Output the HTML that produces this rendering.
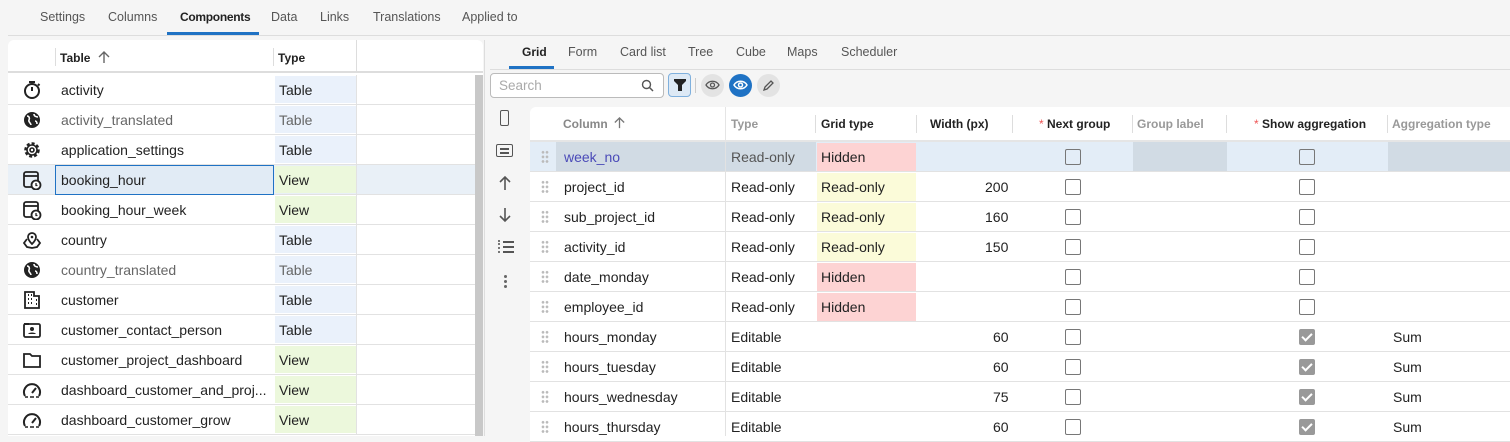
<!DOCTYPE html>
<html><head><meta charset="utf-8"><style>
*{box-sizing:border-box;margin:0;padding:0}
body{width:1510px;height:436px;overflow:hidden;background:#f5f5f5;font-family:"Liberation Sans",Arial,sans-serif;color:#222;position:relative;font-size:14px}
.a{position:absolute}
.tab{position:absolute;top:10px;font-size:12.5px;color:#555}
.lp{position:absolute;left:8px;top:40px;width:475px;height:396px;background:#fff;border-radius:6px 6px 0 0;overflow:hidden}
.lr{position:absolute;left:0;width:467px;height:30px;border-bottom:1px solid #e2e2e2}
.lr .ic{position:absolute;left:14px;top:5px;width:20px;height:20px}
.lr .n{position:absolute;left:53px;top:7px;font-size:14px}
.lr .t{position:absolute;left:267px;top:1px;width:81px;height:27px;padding:6px 4px;font-size:14px}
.lr .s{position:absolute;left:348px;top:0;width:1px;height:30px;background:#e2e2e2}
.tb{background:#eaf1fb}.vw{background:#ecf8dc}
.gh{position:absolute;top:117px;font-size:12px;font-weight:bold}
.gr{position:absolute;left:530px;width:980px;height:30px;border-bottom:1px solid #e2e2e2;background:#fff}
.gr span{position:absolute;top:7px;font-size:14px}
.dr{position:absolute;left:11px;top:8px;width:8px;height:14px;background-image:radial-gradient(circle,#bbb 1.2px,transparent 1.5px);background-size:4px 4.6px}
.cb{position:absolute;top:7px;width:16px;height:16px;border:1.6px solid #777;border-radius:2px}
.cb.on{background:#999;border-color:#999}
.cb.on::after{content:"";position:absolute;left:4px;top:1px;width:4px;height:8px;border:solid #fff;border-width:0 2px 2px 0;transform:rotate(45deg)}
.gr span.pk{position:absolute;left:287px;top:1px;width:99px;height:28px;padding:6px 4px}
</style></head><body>
<!-- top tabs -->
<div class="tab" style="left:40px">Settings</div>
<div class="tab" style="left:108px">Columns</div>
<div class="tab" style="left:180px;color:#222;font-weight:bold;font-size:12px;letter-spacing:-0.3px">Components</div>
<div class="tab" style="left:271px">Data</div>
<div class="tab" style="left:320px">Links</div>
<div class="tab" style="left:373px">Translations</div>
<div class="tab" style="left:462px">Applied to</div>
<div class="a" style="left:8px;top:35px;width:1502px;height:1px;background:#ddd"></div>
<div class="a" style="left:167px;top:32px;width:92px;height:3px;background:#1f72c4"></div>

<!-- left panel -->
<div class="lp">
 <div class="a" style="left:0;top:0;width:475px;height:33px;border-bottom:2px solid #ddd"></div>
 <div class="a" style="left:47px;top:8px;width:1px;height:18px;background:#ddd"></div>
 <div class="a" style="left:52px;top:11px;font-size:12px;font-weight:bold">Table</div>
 <svg class="a" style="left:89px;top:10px" width="14" height="14" viewBox="0 0 14 14"><path d="M7 13V2M2 7l5-5 5 5" fill="none" stroke="#666" stroke-width="1.4"/></svg>
 <div class="a" style="left:265px;top:8px;width:1px;height:18px;background:#ddd"></div>
 <div class="a" style="left:270px;top:11px;font-size:12px;font-weight:bold">Type</div>
 <div class="a" style="left:348px;top:0;width:1px;height:33px;background:#ddd"></div>
 <div class="a" style="left:467px;top:35px;width:8px;height:365px;background:#c8c8c8"></div>

 <div class="lr" style="top:35px"><svg class="ic" viewBox="0 0 20 20"><circle cx="10" cy="11" r="7" fill="none" stroke="#222" stroke-width="2"/><path d="M7 2h6M10 11V7M16 4l1.5 1.5" stroke="#222" stroke-width="2"/></svg><span class="n">activity</span><span class="t tb">Table</span><i class="s"></i></div>
 <div class="lr" style="top:65px"><svg class="ic" viewBox="0 0 20 20"><circle cx="10" cy="10" r="8" fill="#222"/><path d="M5 6c2 0 3 2 2 4s2 3 2 5M12 4c0 2 2 3 4 3M13 11c1 0 2 1 2 3" stroke="#fff" stroke-width="1.6" fill="none"/></svg><span class="n" style="color:#666">activity_translated</span><span class="t tb" style="color:#666">Table</span><i class="s"></i></div>
 <div class="lr" style="top:95px"><svg class="ic" viewBox="0 0 20 20"><circle cx="10" cy="10" r="6.5" fill="none" stroke="#222" stroke-width="2.5" stroke-dasharray="3 2"/><circle cx="10" cy="10" r="5" fill="none" stroke="#222" stroke-width="1.6"/><circle cx="10" cy="10" r="2" fill="none" stroke="#222" stroke-width="1.6"/></svg><span class="n">application_settings</span><span class="t tb">Table</span><i class="s"></i></div>
 <div class="lr" style="top:125px;background:#e9f0f7"><svg class="ic" viewBox="0 0 20 20"><rect x="2" y="2" width="14" height="15" rx="2" fill="none" stroke="#222" stroke-width="1.8"/><path d="M2 6h14" stroke="#222" stroke-width="1.8"/><circle cx="14" cy="15" r="4.5" fill="#fff" stroke="#222" stroke-width="1.8"/><path d="M14 13v2.5h1.5" stroke="#222" stroke-width="1.3" fill="none"/></svg><span class="a" style="left:47px;top:0;width:219px;height:30px;border:1.5px solid #1f72c4;background:#e1ebf5"></span><span class="n">booking_hour</span><span class="t vw">View</span><i class="s"></i></div>
 <div class="lr" style="top:155px"><svg class="ic" viewBox="0 0 20 20"><rect x="2" y="2" width="14" height="15" rx="2" fill="none" stroke="#222" stroke-width="1.8"/><path d="M2 6h14" stroke="#222" stroke-width="1.8"/><circle cx="14" cy="15" r="4.5" fill="#fff" stroke="#222" stroke-width="1.8"/><path d="M14 13v2.5h1.5" stroke="#222" stroke-width="1.3" fill="none"/></svg><span class="n">booking_hour_week</span><span class="t vw">View</span><i class="s"></i></div>
 <div class="lr" style="top:185px"><svg class="ic" viewBox="0 0 20 20"><path d="M10 3a4 4 0 0 1 4 4c0 3-4 7-4 7S6 10 6 7a4 4 0 0 1 4-4z" fill="none" stroke="#222" stroke-width="1.8"/><circle cx="10" cy="7" r="1.3" fill="#222"/><path d="M5 9l-3 4 3 4 5 1 5-1 3-4-3-4" fill="none" stroke="#222" stroke-width="1.8"/></svg><span class="n">country</span><span class="t tb">Table</span><i class="s"></i></div>
 <div class="lr" style="top:215px"><svg class="ic" viewBox="0 0 20 20"><circle cx="10" cy="10" r="8" fill="#222"/><path d="M5 6c2 0 3 2 2 4s2 3 2 5M12 4c0 2 2 3 4 3M13 11c1 0 2 1 2 3" stroke="#fff" stroke-width="1.6" fill="none"/></svg><span class="n" style="color:#666">country_translated</span><span class="t tb" style="color:#666">Table</span><i class="s"></i></div>
 <div class="lr" style="top:245px"><svg class="ic" viewBox="0 0 20 20"><path d="M3 18V2h9v4h5v12z" fill="none" stroke="#222" stroke-width="1.8"/><path d="M6 5h1M9 5h1M6 9h1M9 9h1M6 13h1M9 13h1M14 10h1M14 14h1" stroke="#222" stroke-width="2"/></svg><span class="n">customer</span><span class="t tb">Table</span><i class="s"></i></div>
 <div class="lr" style="top:275px"><svg class="ic" viewBox="0 0 20 20"><rect x="2" y="4" width="16" height="13" rx="1.5" fill="none" stroke="#222" stroke-width="1.8"/><circle cx="10" cy="9" r="2" fill="#222"/><path d="M6 14c1-2 7-2 8 0z" fill="#222"/><path d="M2 4h5" stroke="#222" stroke-width="2"/></svg><span class="n">customer_contact_person</span><span class="t tb">Table</span><i class="s"></i></div>
 <div class="lr" style="top:305px"><svg class="ic" viewBox="0 0 20 20"><path d="M2 4h6l2 2h8v11H2z" fill="none" stroke="#222" stroke-width="1.8"/></svg><span class="n">customer_project_dashboard</span><span class="t vw">View</span><i class="s"></i></div>
 <div class="lr" style="top:335px"><svg class="ic" viewBox="0 0 20 20"><path d="M3 16a8 8 0 1 1 14 0" fill="none" stroke="#222" stroke-width="2"/><path d="M10 13l4-5" stroke="#222" stroke-width="2"/><path d="M3 17h3M8 17h4M14 17h3" stroke="#222" stroke-width="1.6"/></svg><span class="n">dashboard_customer_and_proj...</span><span class="t vw">View</span><i class="s"></i></div>
 <div class="lr" style="top:365px"><svg class="ic" viewBox="0 0 20 20"><path d="M3 16a8 8 0 1 1 14 0" fill="none" stroke="#222" stroke-width="2"/><path d="M10 13l4-5" stroke="#222" stroke-width="2"/><path d="M3 17h3M8 17h4M14 17h3" stroke="#222" stroke-width="1.6"/></svg><span class="n">dashboard_customer_grow</span><span class="t vw">View</span><i class="s"></i></div>
</div>
<div class="a" style="left:484px;top:40px;width:1px;height:396px;background:#ddd"></div>

<!-- right tabs -->
<div class="tab" style="left:522px;top:45px;color:#222;font-weight:bold;font-size:12px">Grid</div>
<div class="tab" style="left:568px;top:45px">Form</div>
<div class="tab" style="left:620px;top:45px">Card list</div>
<div class="tab" style="left:688px;top:45px">Tree</div>
<div class="tab" style="left:736px;top:45px">Cube</div>
<div class="tab" style="left:787px;top:45px">Maps</div>
<div class="tab" style="left:841px;top:45px">Scheduler</div>
<div class="a" style="left:490px;top:69px;width:1020px;height:1px;background:#ddd"></div>
<div class="a" style="left:509px;top:66px;width:45px;height:3px;background:#1f72c4"></div>

<!-- toolbar -->
<div class="a" style="left:490px;top:73px;width:174px;height:25px;border:1px solid #bbb;border-radius:4px;background:#fff"><span class="a" style="left:8px;top:4px;color:#aaa;font-size:13.5px">Search</span>
<svg class="a" style="left:150px;top:5px" width="13" height="13" viewBox="0 0 13 13"><circle cx="5.5" cy="5.5" r="4" fill="none" stroke="#555" stroke-width="1.4"/><path d="M8.5 8.5l3.5 3.5" stroke="#555" stroke-width="1.5"/></svg></div>
<div class="a" style="left:668px;top:73px;width:23px;height:24px;border:1px solid #7fb0dd;border-radius:4px;background:#dde9f5"><svg class="a" style="left:5px;top:5px" width="12" height="12" viewBox="0 0 12 12"><path d="M0 0h12v2L8 6v6H4V6L0 2z" fill="#222"/></svg></div>
<div class="a" style="left:695px;top:78px;width:1px;height:15px;background:#ccc"></div>
<div class="a" style="left:701px;top:74px;width:23px;height:23px;border-radius:50%;background:#e3e3e3"><svg class="a" style="left:4px;top:5px" width="15" height="13" viewBox="0 0 15 13"><path d="M1 6c3-5 10-5 13 0-3 5-10 5-13 0z" fill="none" stroke="#555" stroke-width="1.3"/><circle cx="7.5" cy="6" r="2" fill="none" stroke="#555" stroke-width="1.3"/></svg></div>
<div class="a" style="left:729px;top:74px;width:23px;height:23px;border-radius:50%;background:#1f72c4"><svg class="a" style="left:4px;top:5px" width="15" height="13" viewBox="0 0 15 13"><path d="M1 6c3-5 10-5 13 0-3 5-10 5-13 0z" fill="none" stroke="#fff" stroke-width="1.5"/><circle cx="7.5" cy="6" r="2" fill="none" stroke="#fff" stroke-width="1.5"/></svg></div>
<div class="a" style="left:757px;top:74px;width:23px;height:23px;border-radius:50%;background:#e3e3e3"><svg class="a" style="left:5px;top:5px" width="13" height="13" viewBox="0 0 13 13"><path d="M2 11l1-3 6-6 2 2-6 6z" fill="none" stroke="#555" stroke-width="1.3"/></svg></div>

<!-- side icons -->
<div class="a" style="left:500px;top:110px;width:9px;height:16px;border:1.6px solid #555;border-radius:2px"></div>
<div class="a" style="left:496px;top:144px;width:17px;height:13px;border:1.5px solid #555;border-radius:2px"><div class="a" style="left:3px;top:3px;width:9px;height:1.5px;background:#555;box-shadow:0 4px 0 #555"></div></div>
<svg class="a" style="left:497px;top:175px" width="16" height="16" viewBox="0 0 16 16"><path d="M8 15V2M3 7l5-5 5 5" fill="none" stroke="#555" stroke-width="1.6"/></svg>
<svg class="a" style="left:497px;top:207px" width="16" height="16" viewBox="0 0 16 16"><path d="M8 1v13M3 9l5 5 5-5" fill="none" stroke="#555" stroke-width="1.6"/></svg>
<div class="a" style="left:498px;top:240px;width:16px;height:14px"><div class="a" style="left:5px;top:1px;width:11px;height:2px;background:#555;box-shadow:0 5px 0 #555,0 10px 0 #555"></div><div class="a" style="left:0;top:0;width:2px;height:13px;border-left:2px dotted #777"></div></div>
<div class="a" style="left:504px;top:275px;width:3px;height:3px;border-radius:50%;background:#666;box-shadow:0 5px 0 #666,0 10px 0 #666"></div>

<!-- grid -->
<div class="a" style="left:530px;top:107px;width:980px;height:35px;background:#fff;border-radius:6px 0 0 0;border-bottom:2px solid #e5e5e5"></div>
<div class="gh" style="left:563px;color:#888">Column</div>
<svg class="a" style="left:613px;top:116px" width="13" height="13" viewBox="0 0 14 14"><path d="M7 13V2M2 7l5-5 5 5" fill="none" stroke="#777" stroke-width="1.4"/></svg>
<div class="a" style="left:725px;top:107px;width:1px;height:35px;background:#e5e5e5"></div>
<div class="gh" style="left:731px;color:#999">Type</div>
<div class="a" style="left:815px;top:115px;width:1px;height:18px;background:#ddd"></div>
<div class="gh" style="left:821px">Grid type</div>
<div class="a" style="left:916px;top:115px;width:1px;height:18px;background:#ddd"></div>
<div class="gh" style="left:930px">Width (px)</div>
<div class="a" style="left:1012px;top:115px;width:1px;height:18px;background:#ddd"></div>
<div class="gh" style="left:1039px"><span style="color:#e55;font-weight:normal">* </span>Next group</div>
<div class="a" style="left:1132px;top:115px;width:1px;height:18px;background:#ddd"></div>
<div class="gh" style="left:1137px;color:#999">Group label</div>
<div class="a" style="left:1226px;top:115px;width:1px;height:18px;background:#ddd"></div>
<div class="gh" style="left:1254px"><span style="color:#e55;font-weight:normal">* </span>Show aggregation</div>
<div class="a" style="left:1387px;top:115px;width:1px;height:18px;background:#ddd"></div>
<div class="gh" style="left:1392px;color:#999">Aggregation type</div>

<div class="gr" style="top:142px;background:#e3edf7"><i class="a" style="left:26px;top:0;width:260px;height:29px;background:#d1dbe4"></i><i class="a" style="left:603px;top:0;width:94px;height:29px;background:#d1dbe4"></i><i class="a" style="left:858px;top:0;width:122px;height:29px;background:#d1dbe4"></i><i class="dr"></i><span style="left:34px;color:#4a4ab8">week_no</span><span style="left:201px;color:#555">Read-only</span><span class="pk" style="background:#fdd3d3">Hidden</span><i class="cb" style="left:535px"></i><i class="cb" style="left:769px"></i></div>
<div class="gr" style="top:172px"><i class="dr"></i><span style="left:34px">project_id</span><span style="left:201px">Read-only</span><span class="pk" style="background:#fbfbd9">Read-only</span><span style="left:455px">200</span><i class="cb" style="left:535px"></i><i class="cb" style="left:769px"></i></div>
<div class="gr" style="top:202px"><i class="dr"></i><span style="left:34px">sub_project_id</span><span style="left:201px">Read-only</span><span class="pk" style="background:#fbfbd9">Read-only</span><span style="left:455px">160</span><i class="cb" style="left:535px"></i><i class="cb" style="left:769px"></i></div>
<div class="gr" style="top:232px"><i class="dr"></i><span style="left:34px">activity_id</span><span style="left:201px">Read-only</span><span class="pk" style="background:#fbfbd9">Read-only</span><span style="left:455px">150</span><i class="cb" style="left:535px"></i><i class="cb" style="left:769px"></i></div>
<div class="gr" style="top:262px"><i class="dr"></i><span style="left:34px">date_monday</span><span style="left:201px">Read-only</span><span class="pk" style="background:#fdd3d3">Hidden</span><i class="cb" style="left:535px"></i><i class="cb" style="left:769px"></i></div>
<div class="gr" style="top:292px"><i class="dr"></i><span style="left:34px">employee_id</span><span style="left:201px">Read-only</span><span class="pk" style="background:#fdd3d3">Hidden</span><i class="cb" style="left:535px"></i><i class="cb" style="left:769px"></i></div>
<div class="gr" style="top:322px"><i class="dr"></i><span style="left:34px">hours_monday</span><span style="left:201px">Editable</span><span style="left:463px">60</span><i class="cb" style="left:535px"></i><i class="cb on" style="left:769px"></i><span style="left:863px">Sum</span></div>
<div class="gr" style="top:352px"><i class="dr"></i><span style="left:34px">hours_tuesday</span><span style="left:201px">Editable</span><span style="left:463px">60</span><i class="cb" style="left:535px"></i><i class="cb on" style="left:769px"></i><span style="left:863px">Sum</span></div>
<div class="gr" style="top:382px"><i class="dr"></i><span style="left:34px">hours_wednesday</span><span style="left:201px">Editable</span><span style="left:463px">75</span><i class="cb" style="left:535px"></i><i class="cb on" style="left:769px"></i><span style="left:863px">Sum</span></div>
<div class="gr" style="top:412px"><i class="dr"></i><span style="left:34px">hours_thursday</span><span style="left:201px">Editable</span><span style="left:463px">60</span><i class="cb" style="left:535px"></i><i class="cb on" style="left:769px"></i><span style="left:863px">Sum</span></div>
<div class="a" style="left:725px;top:142px;width:1px;height:294px;background:#e2e2e2"></div>
</body></html>
